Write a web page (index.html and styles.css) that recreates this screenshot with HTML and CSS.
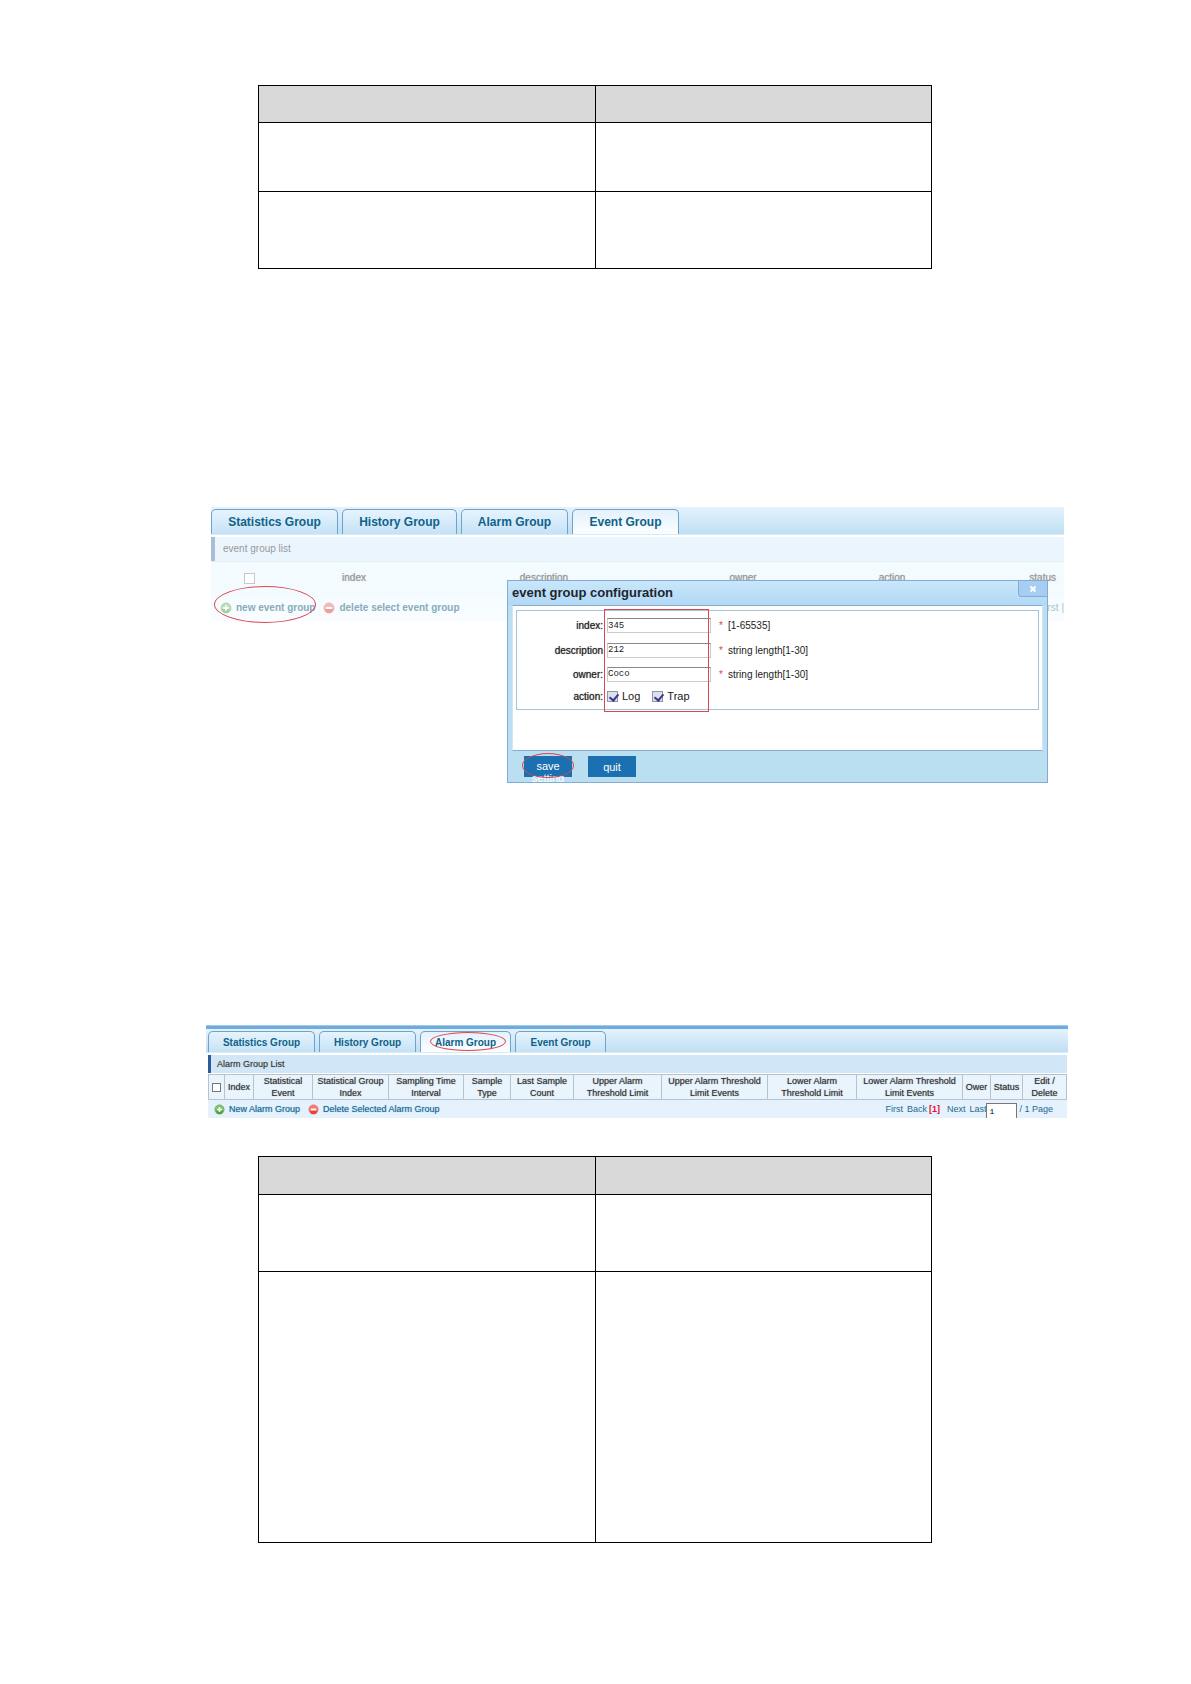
FILE: index.html
```
<!DOCTYPE html>
<html lang="en">
<head>
    <meta charset="UTF-8">
    <meta name="viewport" content="width=device-width, initial-scale=1.0">
    <title>RMON Configuration</title>
    <link rel="stylesheet" href="styles.css">
</head>
<body>
    <svg class="symbols" aria-hidden="true">
        <symbol id="add" viewBox="0 0 12 12">
            <circle cx="6" cy="6" r="5" fill="#7cc46a" stroke="#6fb565" stroke-width="1"/>
            <path d="M2 7a4 4 0 0 0 8 0z" fill="#4fa345"/>
            <path d="M6 3.200v5.600M3.200 6h5.600" stroke="#fff" stroke-width="1.800"/>
        </symbol>
        <symbol id="remove" viewBox="0 0 12 12">
            <circle cx="6" cy="6" r="5" fill="#f47a72" stroke="#e8736c" stroke-width="1"/>
            <path d="M2 7a4 4 0 0 0 8 0z" fill="#e2453c"/>
            <path d="M3 6h6" stroke="#fff" stroke-width="2"/>
        </symbol>
    </svg>

    <table class="doc-table first">
        <thead>
            <tr><th></th><th></th></tr>
        </thead>
        <tbody>
            <tr class="short"><td></td><td></td></tr>
            <tr class="medium"><td></td><td></td></tr>
        </tbody>
    </table>

    <section class="event-panel">
        <nav class="tabs">
            <a href="#" class="tab wide">Statistics Group</a>
            <a href="#" class="tab">History Group</a>
            <a href="#" class="tab">Alarm Group</a>
            <a href="#" class="tab active">Event Group</a>
        </nav>
        <div class="faded">
            <h2 class="list-title">event group list</h2>
            <table class="event-table">
                <colgroup><col><col><col><col><col><col></colgroup>
                <tr>
                    <th><input type="checkbox" class="check" aria-label="Select all events"></th>
                    <th>index</th>
                    <th>description</th>
                    <th>owner</th>
                    <th>action</th>
                    <th class="last">status</th>
                </tr>
            </table>
            <div class="actions">
                <a href="#"><svg class="icon"><use href="#add"/></svg>new event group</a>
                <a href="#"><svg class="icon"><use href="#remove"/></svg>delete select event group</a>
                <a href="#" class="pager-link">first |</a>
            </div>
        </div>
        <span class="mark mark-new"></span>

        <form class="dialog">
            <div class="dialog-head">
                <h2>event group configuration</h2>
                <button type="button" class="close" aria-label="Close"><svg viewBox="0 0 8 8"><path d="M1.500 1.500l5 5M6.500 1.500l-5 5" stroke="#fff" stroke-width="2"/></svg></button>
            </div>
            <div class="dialog-body">
                <div class="fields">
                    <label for="index">index:</label>
                    <input type="text" id="index" value="345">
                    <span class="hint"><b>*</b>[1-65535]</span>
                    <label for="description">description</label>
                    <input type="text" id="description" value="212">
                    <span class="hint"><b>*</b>string length[1-30]</span>
                    <label for="owner">owner:</label>
                    <input type="text" id="owner" value="Coco">
                    <span class="hint"><b>*</b>string length[1-30]</span>
                    <span class="name">action:</span>
                    <div class="checks">
                        <label><input type="checkbox" class="check" checked>Log</label>
                        <label><input type="checkbox" class="check" checked>Trap</label>
                    </div>
                    <span class="mark mark-fields"></span>
                </div>
            </div>
            <div class="dialog-foot">
                <button type="button" class="btn">save setting</button>
                <button type="button" class="btn quit">quit</button>
                <span class="mark mark-save"></span>
            </div>
        </form>
    </section>

    <section class="alarm-panel">
        <nav class="tabs">
            <a href="#" class="tab wide">Statistics Group</a>
            <a href="#" class="tab">History Group</a>
            <a href="#" class="tab active">Alarm Group<span class="mark mark-tab"></span></a>
            <a href="#" class="tab">Event Group</a>
        </nav>
        <h2 class="list-title">Alarm Group List</h2>
        <table class="alarm-table">
            <colgroup><col><col><col><col><col><col><col><col><col><col><col><col><col><col></colgroup>
            <tr>
                <th><input type="checkbox" class="check" aria-label="Select all alarms"></th>
                <th>Index</th>
                <th>Statistical<br>Event</th>
                <th>Statistical Group<br>Index</th>
                <th>Sampling Time<br>Interval</th>
                <th>Sample<br>Type</th>
                <th>Last Sample<br>Count</th>
                <th>Upper Alarm<br>Threshold Limit</th>
                <th>Upper Alarm Threshold<br>Limit Events</th>
                <th>Lower Alarm<br>Threshold Limit</th>
                <th>Lower Alarm Threshold<br>Limit Events</th>
                <th>Ower</th>
                <th>Status</th>
                <th>Edit /<br>Delete</th>
            </tr>
        </table>
        <div class="actions">
            <a href="#"><svg class="icon"><use href="#add"/></svg>New Alarm Group</a>
            <a href="#"><svg class="icon"><use href="#remove"/></svg>Delete Selected Alarm Group</a>
            <div class="pager">
                <a href="#">First</a>
                <a href="#">Back</a>
                <b>[1]</b>
                <a href="#">Next</a>
                <a href="#">Last</a>
                <input type="text" value="1" aria-label="Page">
                <span>/ 1 Page</span>
            </div>
        </div>
    </section>

    <table class="doc-table second">
        <thead>
            <tr><th></th><th></th></tr>
        </thead>
        <tbody>
            <tr class="medium"><td></td><td></td></tr>
            <tr class="tall"><td></td><td></td></tr>
        </tbody>
    </table>
</body>
</html>
```
FILE: styles.css
```
* {
    box-sizing: border-box;
}
body {
    margin: 0;
    padding: 85px 0 140px;
    background: #fff;
    font-family: "Liberation Sans", Arial, sans-serif;
    font-size: 10px;
    color: #333;
}
a {
    color: #1b6a94;
    text-decoration: none;
}
h2 {
    margin: 0;
}
table {
    width: 100%;
    table-layout: fixed;
    border-collapse: collapse;
}
.symbols {
    display: none;
}
.icon {
    width: 12px;
    height: 12px;
}

/* empty document tables */
.doc-table {
    width: calc(100% - 517px);
    margin: 0 259px 0 258px;
}
.doc-table th,
.doc-table td {
    border: 1px solid #000;
    padding: 0;
}
.doc-table th {
    height: 37px;
    background: #d9d9d9;
}
.doc-table.second th {
    height: 38px;
}
.short td {
    height: 69px;
}
.medium td {
    height: 77px;
}
.tall td {
    height: 271px;
}

/* tabs */
.tabs {
    display: flex;
    gap: 4px;
    padding-top: 2px;
    background: linear-gradient(#e4f2fd, #bfdff3);
    border-bottom: 1px solid #d5ebf7;
}
.tab {
    position: relative;
    display: flex;
    align-items: center;
    justify-content: center;
    border: 1px solid #6fa3cc;
    border-bottom: 0;
    border-radius: 5px 5px 0 0;
    background: linear-gradient(#e6f4fe, #c5e2f6);
    color: #0f6288;
    font-weight: bold;
}
.tab.active {
    background: linear-gradient(#e4f1fc, #fbfeff);
}

.check {
    appearance: none;
    position: relative;
    width: 11px;
    height: 11px;
    margin: 0;
    border: 1px solid #777;
    background: #fff;
    vertical-align: middle;
}
.check:checked {
    background: #dfe0ee;
    border-color: #8a97a8;
}
.check:checked::after {
    content: "";
    position: absolute;
    left: 3px;
    top: 0;
    width: 4px;
    height: 7px;
    border: solid #3a3a8c;
    border-width: 0 2px 2px 0;
    transform: rotate(40deg);
}

/* red annotation outlines */
.mark {
    position: absolute;
    border: 1px solid #dc4650;
    border-radius: 50%;
    pointer-events: none;
}

/* event group */
.event-panel {
    position: relative;
    height: 275px;
    margin: 238px 127px 0 211px;
}
.event-panel .tabs {
    height: 28px;
    font-size: 12px;
}
.event-panel .tab {
    min-width: 107px;
    padding: 0 12px;
}
.event-panel .tab.wide {
    min-width: 127px;
}
.event-panel .tab:nth-child(2) {
    min-width: 115px;
}
.faded {
    padding-top: 2px;
    background: #fff;
}
.faded .list-title {
    height: 24px;
    padding-left: 8px;
    border-left: 4px solid #a9bdd4;
    background: #ebf5fe;
    color: #999;
    font-size: 10px;
    font-weight: normal;
    line-height: 24px;
}
.event-table {
    border-top: 1px solid #e3f1f5;
    background: #f4fbff;
}
.event-table col:nth-child(1) { width: 77px; }
.event-table col:nth-child(2) { width: 132px; }
.event-table col:nth-child(3) { width: 248px; }
.event-table col:nth-child(4) { width: 150px; }
.event-table col:nth-child(5) { width: 148px; }
.event-table col:nth-child(6) { width: 98px; }
.event-table th {
    height: 32px;
    padding: 0;
    color: #999;
    font-weight: normal;
    text-shadow: 0 0 1px #aaa;
}
.event-table .last {
    padding-right: 8px;
    text-align: right;
}
.event-table .check {
    border-color: #c4c8ca;
}
.faded .actions {
    display: flex;
    align-items: center;
    gap: 8px;
    height: 28px;
    padding-left: 9px;
    background: linear-gradient(#f4fbff, #fafdff);
    font-weight: bold;
}
.faded .actions a {
    display: flex;
    align-items: center;
    gap: 4px;
    color: #86adbc;
}
.faded .icon {
    opacity: 0.5;
}
.faded .actions .pager-link {
    margin-left: auto;
    color: #a9c3cd;
    font-weight: normal;
}
.mark-new {
    left: 3px;
    top: 79px;
    width: 102px;
    height: 37px;
}

/* dialog */
.dialog {
    position: absolute;
    top: 73px;
    right: 16px;
    width: 541px;
    height: 203px;
    padding: 0 4px;
    overflow: hidden;
    border: 1px solid #86abd2;
    background: #badff1;
}
.dialog-head {
    display: flex;
    justify-content: space-between;
    height: 24px;
    margin: 0 -4px;
    padding-left: 4px;
    background: linear-gradient(#c9e7fb, #b2d8f4);
}
.dialog-head h2 {
    color: #1c2630;
    font-size: 13px;
    line-height: 24px;
}
.close {
    width: 29px;
    height: 16px;
    padding: 0;
    border: 1px solid #86abd8;
    border-width: 0 0 1px 1px;
    border-radius: 0 0 0 4px;
    background: #a6cdf2;
    line-height: 0;
}
.close svg {
    width: 8px;
    height: 8px;
}
.dialog-body {
    height: 146px;
    padding: 4px 3px;
    border: 1px solid #86abd2;
    border-left-color: #d5e6f2;
    border-right-color: #d5e6f2;
    background: #fff;
}
.fields {
    position: relative;
    display: grid;
    grid-template-columns: 86px 104px 1fr;
    grid-template-rows: 25px 24px 24px 20px;
    align-items: center;
    column-gap: 4px;
    height: 100px;
    padding-top: 2px;
    border: 1px solid #a6c4d8;
    color: #222;
}
.fields > label,
.name {
    text-align: right;
    text-shadow: 0 0 1px #666;
}
.fields > input {
    width: 104px;
    height: 15px;
    padding: 0;
    border: 1px solid #ccc;
    border-top-color: #888;
    background: #fff;
    color: #222;
    font: 9px "Liberation Mono", monospace;
}
.hint {
    padding-left: 4px;
}
.hint b {
    display: inline-block;
    width: 9px;
    color: #d9493d;
    font-weight: normal;
}
.checks {
    display: flex;
    gap: 12px;
}
.checks label {
    display: flex;
    align-items: center;
    gap: 4px;
    font-size: 11px;
}
.mark-fields {
    left: 87px;
    top: -2px;
    width: 105px;
    height: 103px;
    border-radius: 0;
}
.dialog-foot {
    position: relative;
    display: flex;
    gap: 16px;
    padding: 5px 12px;
}
.btn {
    width: 48px;
    height: 21px;
    padding: 4px 7px;
    border: 0;
    background: #1a70b0;
    color: #fff;
    font: 11px/12px "Liberation Sans", Arial, sans-serif;
}
.btn:first-child {
    /* the label wraps and runs out under the button */
    display: flex;
    align-items: flex-start;
}
.mark-save {
    left: 10px;
    top: 2px;
    width: 52px;
    height: 25px;
}

/* alarm group */
.alarm-panel {
    margin: 243px 123px 0 206px;
    padding-left: 2px;
    border-top: 1px solid #9fcbe8;
    font-size: 9px;
}
.alarm-panel .tabs {
    height: 27px;
    margin-left: -2px;
    padding: 2px 0 0 2px;
    border-top: 3px solid #6fabdc;
}
.alarm-panel .tab {
    min-width: 91px;
    font-size: 10px;
}
.alarm-panel .tab.wide {
    min-width: 107px;
}
.alarm-panel .tab:nth-child(2) {
    min-width: 97px;
}
.mark-tab {
    inset: 0 4px 1px 9px;
}
.alarm-panel .list-title {
    height: 18px;
    margin: 2px 1px 1px 0;
    padding-left: 6px;
    border-left: 3px solid #2c5d98;
    background: #d1e7f7;
    font-size: 9px;
    font-weight: normal;
    line-height: 18px;
    text-shadow: 0 0 1px #999;
}
.alarm-table {
    width: calc(100% - 1px);
    background: #e9f4fd;
}
.alarm-table col:nth-child(1) { width: 16px; }
.alarm-table col:nth-child(2) { width: 29px; }
.alarm-table col:nth-child(3) { width: 59px; }
.alarm-table col:nth-child(4) { width: 76px; }
.alarm-table col:nth-child(5) { width: 75px; }
.alarm-table col:nth-child(6) { width: 47px; }
.alarm-table col:nth-child(7) { width: 63px; }
.alarm-table col:nth-child(8) { width: 88px; }
.alarm-table col:nth-child(9) { width: 106px; }
.alarm-table col:nth-child(10) { width: 89px; }
.alarm-table col:nth-child(11) { width: 106px; }
.alarm-table col:nth-child(12) { width: 28px; }
.alarm-table col:nth-child(13) { width: 32px; }
.alarm-table col:nth-child(14) { width: 44px; }
.alarm-table th {
    height: 25px;
    padding: 0;
    border: 1px solid #b4c3ce;
    color: #333;
    font-weight: normal;
    line-height: 12px;
    text-shadow: 0 0 1px #777;
    white-space: nowrap;
}
.alarm-table .check {
    width: 9px;
    height: 9px;
}
.alarm-panel .actions {
    display: flex;
    align-items: center;
    gap: 8px;
    height: 18px;
    margin-right: 1px;
    padding-left: 6px;
    overflow: hidden;
    background: #e5f2fd;
}
.alarm-panel .actions > a {
    display: flex;
    align-items: center;
    gap: 4px;
    text-shadow: 0 0 1px #5f9cbc;
}
.alarm-panel .icon {
    width: 11px;
    height: 11px;
}
.pager {
    display: flex;
    align-items: center;
    gap: 4px;
    height: 18px;
    margin-left: auto;
    padding-right: 14px;
    color: #1b6a94;
}
.pager b {
    margin: 0 3px 0 -2px;
    color: #e8112d;
}
.pager input {
    align-self: flex-end;
    width: 31px;
    height: 15px;
    margin: 0 -2px 0 -4px;
    padding: 0 2px;
    border: 1px solid #777;
    border-width: 1px 1px 0;
    background: #fff;
    font: 8px "Liberation Mono", monospace;
}

.doc-table.second {
    margin-top: 38px;
}
```
